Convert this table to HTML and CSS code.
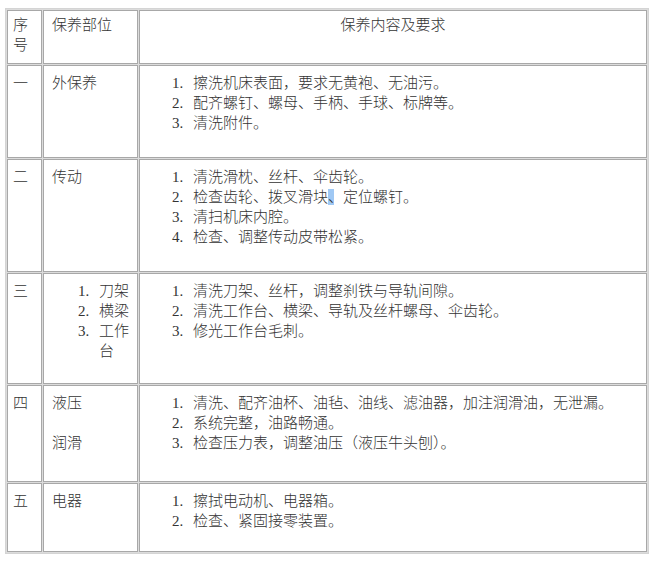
FILE: index.html
```html
<!DOCTYPE html>
<html lang="zh-CN">
<head>
<meta charset="utf-8">
<title>保养内容及要求</title>
<link rel="stylesheet" href="styles.css">
</head>
<body>
<table class="grid">
  <colgroup><col class="c1"><col class="c2"><col class="c3"></colgroup>
  <tr class="r0">
    <td class="idx hd">序号</td>
    <td class="part hd">保养部位</td>
    <td class="head hd">保养内容及要求</td>
  </tr>
  <tr class="r1">
    <td class="idx">一</td>
    <td class="part">外保养</td>
    <td class="content">
      <div class="item"><span class="n">1.</span><span class="t">擦洗机床表面，要求无黄袍、无油污。</span></div>
      <div class="item"><span class="n">2.</span><span class="t">配齐螺钉、螺母、手柄、手球、标牌等。</span></div>
      <div class="item"><span class="n">3.</span><span class="t">清洗附件。</span></div>
    </td>
  </tr>
  <tr class="r2">
    <td class="idx">二</td>
    <td class="part">传动</td>
    <td class="content">
      <div class="item"><span class="n">1.</span><span class="t">清洗滑枕、丝杆、伞齿轮。</span></div>
      <div class="item"><span class="n">2.</span><span class="t">检查齿轮、拨叉滑块<span class="sel">、</span>定位螺钉。</span></div>
      <div class="item"><span class="n">3.</span><span class="t">清扫机床内腔。</span></div>
      <div class="item"><span class="n">4.</span><span class="t">检查、调整传动皮带松紧。</span></div>
    </td>
  </tr>
  <tr class="r3">
    <td class="idx">三</td>
    <td class="part plist">
      <div class="item"><span class="n">1.</span><span class="t">刀架</span></div>
      <div class="item"><span class="n">2.</span><span class="t">横梁</span></div>
      <div class="item"><span class="n">3.</span><span class="t">工作台</span></div>
    </td>
    <td class="content">
      <div class="item"><span class="n">1.</span><span class="t">清洗刀架、丝杆，调整刹铁与导轨间隙。</span></div>
      <div class="item"><span class="n">2.</span><span class="t">清洗工作台、横梁、导轨及丝杆螺母、伞齿轮。</span></div>
      <div class="item"><span class="n">3.</span><span class="t">修光工作台毛刺。</span></div>
    </td>
  </tr>
  <tr class="r4">
    <td class="idx">四</td>
    <td class="part">液压<br><br>润滑</td>
    <td class="content">
      <div class="item"><span class="n">1.</span><span class="t">清洗、配齐油杯、油毡、油线、滤油器，加注润滑油，无泄漏。</span></div>
      <div class="item"><span class="n">2.</span><span class="t">系统完整，油路畅通。</span></div>
      <div class="item"><span class="n">3.</span><span class="t">检查压力表，调整油压（液压牛头刨）。</span></div>
    </td>
  </tr>
  <tr class="r5">
    <td class="idx">五</td>
    <td class="part">电器</td>
    <td class="content">
      <div class="item"><span class="n">1.</span><span class="t">擦拭电动机、电器箱。</span></div>
      <div class="item"><span class="n">2.</span><span class="t">检查、紧固接零装置。</span></div>
    </td>
  </tr>
</table>
</body>
</html>
```
FILE: styles.css
```css
html, body {
  background: #ffffff;
}
body {
  margin: 8px 0 0 5px;
  font-family: "Liberation Serif", "Noto Sans CJK SC", serif;
  font-size: 15px;
  font-weight: 300;
  line-height: 20px;
  color: #333333;
}
.grid {
  table-layout: fixed;
  width: 644px;
  border-collapse: separate;
  border-spacing: 1px;
  border: 1px solid #d4d4d4;
  background: #dcdcdc;
}
.c1 { width: 35px; }
.c2 { width: 95px; }
.grid td {
  background: #ffffff;
  border: 1px solid #a8a8a8;
  vertical-align: top;
  padding: 7px 0 0 0;
  box-sizing: border-box;
}
.grid td.hd {
  padding-top: 4px;
}
.r0 { height: 54px; }
.r1 { height: 93px; }
.r2 { height: 113px; }
.r3 { height: 111px; }
.r4 { height: 97px; }
.r5 { height: 69px; }

.idx {
  padding-left: 5px !important;
  padding-right: 3px !important;
}
.part {
  padding-left: 8px !important;
}
.part.plist {
  padding-left: 34px !important;
  padding-right: 0 !important;
}
.head {
  text-align: center;
}
.content {
  padding-left: 32px !important;
}
.item {
  display: flex;
}
.n {
  flex: 0 0 21px;
}
.t {
  flex: 1 1 auto;
  min-width: 0;
}
.sel {
  background: linear-gradient(#9fc8f4, #9fc8f4) no-repeat 0 0 / 6px 100%;
}
```
